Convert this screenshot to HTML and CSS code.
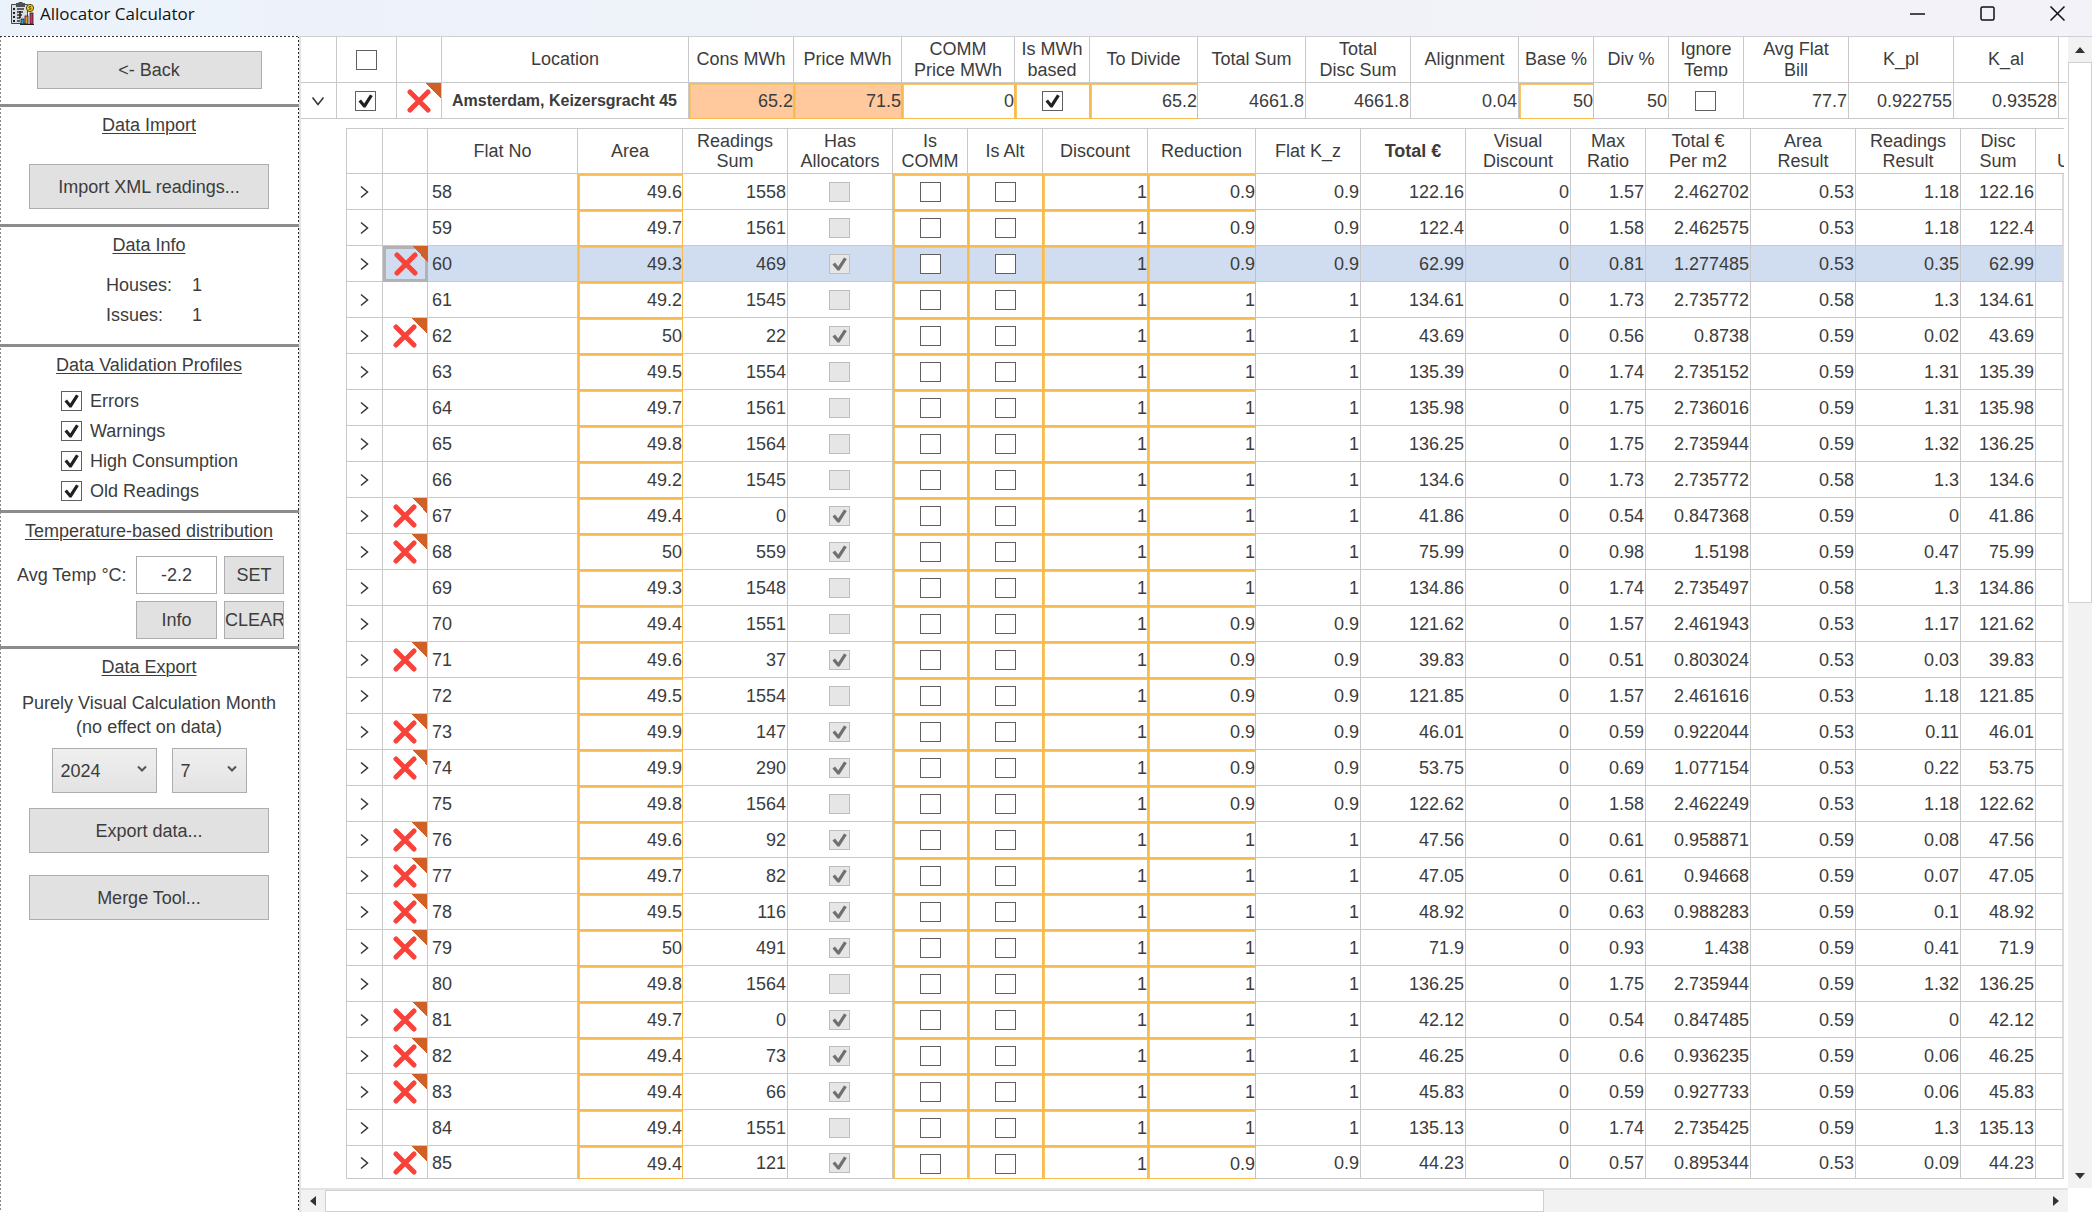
FILE: index.html
```html
<!DOCTYPE html>
<html lang="en">
<head>
<meta charset="utf-8">
<title>Allocator Calculator</title>
<link rel="stylesheet" href="styles.css">
</head>
<body>
<header class="titlebar">
  <svg class="logo" viewBox="0 0 24 24" aria-hidden="true">
    <rect x="1" y="3" width="17" height="20" rx="1" fill="#4a4a4a"/>
    <rect x="2" y="4" width="15" height="18" fill="#d9dde2"/>
    <path d="M6 2h2l1-1h3l1 1h2v4H6z" fill="#4a5258"/>
    <path d="M3 7h2v2H3zM3 11h2v2H3zM3 15h2v2H3zM3 19h2v2H3z" fill="#222"/>
    <path d="M7 8h7M7 11h6M7 14h5M7 17h3M7 20h3" stroke="#333" stroke-width="1.4"/>
    <path d="M10 10v7" stroke="#222" stroke-width="1.6"/>
    <rect x="11" y="18" width="3" height="5" fill="#2a9fd8" stroke="#222" stroke-width=".8"/>
    <rect x="15" y="15" width="3" height="8" fill="#f08a24" stroke="#222" stroke-width=".8"/>
    <rect x="20" y="12" width="3" height="11" fill="#d5305c" stroke="#222" stroke-width=".8"/>
    <circle cx="20" cy="7" r="3.6" fill="#f4cf1c" stroke="#3a3206" stroke-width=".9"/>
    <path d="M21.200 5.600h-1.600a.7.7 0 0 0 0 1.400h.8a.7.7 0 0 1 0 1.400h-1.600" fill="none" stroke="#3a3206" stroke-width=".8"/>
    <path d="M10 23.500h14" stroke="#222"/>
  </svg>
  <h1 class="title">Allocator Calculator</h1>
  <div class="window-buttons">
    <button type="button" aria-label="Minimize"><svg viewBox="0 0 16 16"><path d="M1 8h15"/></svg></button>
    <button type="button" aria-label="Maximize"><svg viewBox="0 0 16 16"><rect x="2" y="1" width="13" height="13" rx="1.500"/></svg></button>
    <button type="button" aria-label="Close"><svg viewBox="0 0 16 16"><path d="M1.500.5l14 14M15.500.5l-14 14"/></svg></button>
  </div>
</header>
<div class="workspace">
  <aside class="sidebar">
    <section class="panel panel-back">
      <button type="button" class="btn btn-back">&lt;- Back</button>
    </section>
    <section class="panel panel-import">
      <h2>Data Import</h2>
      <button type="button" class="btn btn-wide">Import XML readings...</button>
    </section>
    <section class="panel panel-info">
      <h2>Data Info</h2>
      <dl class="info"><dt>Houses:</dt><dd>1</dd><dt>Issues:</dt><dd>1</dd></dl>
    </section>
    <section class="panel panel-profiles">
      <h2>Data Validation Profiles</h2>
      <div class="profiles">
        <label><input type="checkbox" checked>Errors</label>
        <label><input type="checkbox" checked>Warnings</label>
        <label><input type="checkbox" checked>High Consumption</label>
        <label><input type="checkbox" checked>Old Readings</label>
      </div>
    </section>
    <section class="panel panel-temp">
      <h2>Temperature-based distribution</h2>
      <div class="temp">
        <label for="avg-temp">Avg Temp °C:</label>
        <input id="avg-temp" class="field" type="text" value="-2.2">
        <button type="button" class="btn">SET</button>
        <button type="button" class="btn temp-info">Info</button>
        <button type="button" class="btn">CLEAR</button>
      </div>
    </section>
    <section class="panel panel-export">
      <h2>Data Export</h2>
      <p>Purely Visual Calculation Month<br>(no effect on data)</p>
      <div class="period">
        <select class="year" aria-label="Year"><option>2024</option></select>
        <select class="month" aria-label="Month"><option>7</option></select>
      </div>
      <button type="button" class="btn btn-wide">Export data...</button>
      <button type="button" class="btn btn-wide">Merge Tool...</button>
    </section>
  </aside>
  <main class="grid">
    <div class="viewport">
      <table class="houses">
        <colgroup id="house-cols"></colgroup>
        <thead>
          <tr>
            <th></th>
            <th><input type="checkbox" aria-label="Select all houses"></th>
            <th></th>
            <th>Location</th><th>Cons MWh</th><th>Price MWh</th><th>COMM<br>Price MWh</th>
            <th>Is MWh<br>based</th><th>To Divide</th><th>Total Sum</th><th>Total<br>Disc Sum</th>
            <th>Alignment</th><th>Base %</th><th>Div %</th><th><span class="clipped">Ignore<br>Temp</span></th>
            <th>Avg Flat<br>Bill</th><th>K_pl</th><th>K_al</th><th></th>
          </tr>
        </thead>
        <tbody>
          <tr class="house">
            <td class="mid"><button type="button" class="expander" aria-label="Collapse house"><svg viewBox="0 0 14 14"><path d="M1.500 3.500L7 10.500l5.500-7"/></svg></button></td>
            <td class="mid"><input type="checkbox" checked aria-label="Select house"></td>
            <td class="mid issue"><svg class="cross" viewBox="0 0 24 24"><path d="M3 3l18 18M21 3L3 21"/></svg></td>
            <td class="location">Amsterdam, Keizersgracht 45</td>
            <td class="edit warm">65.2</td><td class="edit warm">71.5</td><td class="edit">0</td>
            <td class="edit mid"><input type="checkbox" checked aria-label="Is MWh based"></td>
            <td class="edit">65.2</td><td>4661.8</td><td>4661.8</td><td>0.04</td>
            <td class="edit">50</td><td>50</td>
            <td class="mid"><input type="checkbox" aria-label="Ignore temp"></td>
            <td>77.7</td><td>0.922755</td><td>0.93528</td><td></td>
          </tr>
        </tbody>
      </table>
      <div class="details">
        <table class="flats">
          <colgroup id="flat-cols"></colgroup>
          <thead>
            <tr>
              <th></th><th></th><th>Flat No</th><th>Area</th><th>Readings<br>Sum</th><th>Has<br>Allocators</th>
              <th>Is<br>COMM</th><th>Is Alt</th><th>Discount</th><th>Reduction</th><th>Flat K_z</th>
              <th class="strong">Total €</th><th>Visual<br>Discount</th><th>Max<br>Ratio</th><th>Total €<br>Per m2</th>
              <th>Area<br>Result</th><th>Readings<br>Result</th><th>Disc<br>Sum</th><th class="cut"><br>U</th>
            </tr>
          </thead>
          <tbody id="flat-rows"></tbody>
        </table>
      </div>
    </div>
    <div class="vbar" aria-hidden="true">
      <svg class="arrow" viewBox="0 0 10 6"><path d="M5 0l5 6H0z"/></svg>
      <div class="thumb"></div>
      <svg class="arrow" viewBox="0 0 10 6"><path d="M0 0h10L5 6z"/></svg>
    </div>
    <div class="hbar" aria-hidden="true">
      <svg class="arrow" viewBox="0 0 6 10"><path d="M6 0v10L0 5z"/></svg>
      <div class="thumb"></div>
      <svg class="arrow" viewBox="0 0 6 10"><path d="M0 0l6 5-6 5z"/></svg>
    </div>
  </main>
</div>
<script src="app.js"></script>
</body>
</html>
```
FILE: styles.css
```css
* { box-sizing: border-box; }
html, body { height: 100%; }
body {
  margin: 0;
  display: flex;
  flex-direction: column;
  overflow: hidden;
  background: #fff;
  color: #3c3c3c;
  font: 18px/24px "Liberation Sans", Arial, sans-serif;
}
button, input, select { font: inherit; color: inherit; margin: 0; }

/* Title bar */
.titlebar {
  flex: none;
  display: flex;
  align-items: flex-start;
  height: 36px;
  padding-left: 10px;
  background: linear-gradient(90deg, #ecf2fb, #f2f2f8 75%);
}
.logo { width: 24px; height: 24px; margin-top: 1px; }
.title {
  flex: 1;
  margin: 0 0 0 6px;
  color: #111;
  font: 17px/28px "Open Sans", "Noto Sans", sans-serif;
}
.window-buttons { display: flex; }
.window-buttons button {
  width: 70px;
  height: 28px;
  padding: 0;
  border: 0;
  background: none;
  line-height: 0;
}
.window-buttons svg { width: 16px; height: 16px; fill: none; stroke: #111; stroke-width: 1.5; }

.workspace { flex: 1; display: flex; min-height: 0; }

/* Sidebar */
.sidebar {
  flex: none;
  width: 299px;
  padding-top: 1px;
  text-align: center;
  background:
    repeating-linear-gradient(90deg, #333 0 2px, #fff 2px 4px) top / 100% 1px no-repeat,
    repeating-linear-gradient(#888 0 2px, #fff 2px 4px) left / 1px 100% no-repeat,
    repeating-linear-gradient(#222 0 2px, #fff 2px 4px) right / 1px 100% no-repeat;
}
.panel {
  display: flex;
  flex-direction: column;
  align-items: center;
  padding: 6px 1px 15px 0;
  border-bottom: 3px solid #8c8c8c;
}
.panel h2 { margin: 0; font-size: 18px; font-weight: 400; text-decoration: underline; text-underline-offset: 2px; text-decoration-thickness: 1px; }
.panel p { margin: 12px 0 9px; }
.panel-back { padding-top: 14px; }
.panel-import .btn { margin-top: 27px; }
.panel-info { padding-bottom: 14px; }
.panel-profiles { padding-bottom: 4px; }
.panel-temp { padding-bottom: 7px; }
.panel-export { border-bottom: 0; }
.panel-export .btn { margin-top: 15px; }
.panel-export .btn + .btn { margin-top: 22px; }
.btn, .field, select {
  height: 38px;
  padding: 0;
  border: 1px solid #adadad;
  border-radius: 0;
  background: #e1e1e1;
  text-align: center;
}
.btn { overflow: hidden; white-space: nowrap; }
.btn-back { width: 225px; }
.btn-wide { width: 240px; height: 45px; }
.field { width: 100%; background: #fff; }
.info {
  display: grid;
  grid-template-columns: 86px auto;
  align-self: flex-start;
  margin: 13px 0 0 106px;
  line-height: 30px;
  text-align: left;
}
.info dd { margin: 0; }
.profiles { align-self: flex-start; margin: 9px 0 0 61px; }
.profiles label { display: flex; align-items: center; gap: 8px; height: 30px; }
.temp {
  display: grid;
  grid-template-columns: 112px 81px 60px;
  gap: 7px;
  margin: 13px 0 0 3px;
  align-items: center;
  white-space: nowrap;
}
.temp label { text-align: left; }
.temp-info { grid-column: 2; }
.period { display: flex; gap: 15px; }
select {
  appearance: none;
  height: 45px;
  padding: 0 8px;
  text-align: left;
  background:
    url("data:image/svg+xml,%3Csvg xmlns='http://www.w3.org/2000/svg' width='10' height='8'%3E%3Cpath d='M1 1.500l4 4 4-4' fill='none' stroke='%23555' stroke-width='2'/%3E%3C/svg%3E") right 9px top 16px no-repeat,
    linear-gradient(#efefef, #e3e3e3);
}
.year { width: 105px; }
.month { width: 75px; }

/* Check boxes */
input[type="checkbox"] {
  appearance: none;
  flex: none;
  display: block;
  width: 21px;
  height: 20px;
  border: 1px solid #606060;
  background: #fff center no-repeat;
}
input[type="checkbox"]:checked {
  background-image: url("data:image/svg+xml,%3Csvg xmlns='http://www.w3.org/2000/svg' width='19' height='18'%3E%3Cpath d='M2.500 9.500l2.500-2 3.200 4L14 2.500l2.800 1.500L9.500 15.500l-2 0z' fill='%23202020'/%3E%3C/svg%3E");
}
input[type="checkbox"]:disabled { border-color: #bdbdbd; background-color: #e6e6e6; }
input[type="checkbox"]:disabled:checked {
  background-image: url("data:image/svg+xml,%3Csvg xmlns='http://www.w3.org/2000/svg' width='19' height='18'%3E%3Cpath d='M2.500 9.500l2.500-2 3.200 4L14 2.500l2.800 1.500L9.500 15.500l-2 0z' fill='%23707070'/%3E%3C/svg%3E");
}

/* Data grid */
.grid {
  flex: 1;
  min-width: 0;
  display: grid;
  grid-template: minmax(0, 1fr) 24px / minmax(0, 1fr) 24px;
  border-left: 2px solid #e2e2e2;
  border-top: 1px solid #d0d0d0;
}
.viewport { display: flex; flex-direction: column; min-height: 0; overflow: hidden; padding: 0 1px 8px 0; }
table { flex: none; table-layout: fixed; border-spacing: 0; width: 0; }
th, td { padding: 0; border: solid #c9c9c9; border-width: 0 1px 1px 0; overflow: hidden; white-space: nowrap; }
th { font-weight: 400; text-align: center; }
td { height: 36px; padding-right: 1px; text-align: right; }
th input, td input { margin: 0 auto; }
.houses th { height: 46px; line-height: 21px; }
.houses th:last-child, .houses td:last-child { border-right: 0; }
.clipped { display: block; clip-path: inset(0 0 4px); }
.houses .location { font-size: 16px; font-weight: 700; text-align: center; }
td.mid { padding: 0 2px 0 0; text-align: center; }
td.edit {
  padding: 0;
  border: 1px solid #f8bb50;
  box-shadow: inset 1px 1px #fac566;
}
.warm { background: #ffc99d; }
td.issue {
  padding-right: 0;
  background: linear-gradient(45deg, transparent 50%, #d06026 50%) right top / 16px 16px no-repeat border-box;
}
.cross { display: block; width: 24px; height: 24px; margin: 0 auto; fill: none; stroke: #f9423a; stroke-width: 5; stroke-linecap: round; }
.expander { display: block; width: 100%; height: 24px; padding: 0; border: 0; background: none; line-height: 0; }
.expander svg { width: 14px; height: 14px; fill: none; stroke: #333; stroke-width: 1.5; }

.details { flex: 1; min-height: 0; margin: 9px 3px 0 45px; overflow: hidden; }
.flats { border-top: 1px solid #c9c9c9; }
.flats th { height: 45px; line-height: 20px; }
.flats tr > :first-child { border-left: 1px solid #c9c9c9; }
.flats .strong { font-weight: 700; }
.flats .name { padding-left: 4px; text-align: left; }
.flats .cut { padding-left: 21px; border-right: 0; text-align: left; }
.flats td:last-child { border-right-width: 2px; border-right-color: #dcdcdc; }
.flats tbody tr:last-child td { height: 33px; padding-top: 2px; }
.flats .selected td:not(:first-child) { background-color: #d0ddf0; }
.flats .selected .issue {
  border: 0;
  background-image:
    linear-gradient(45deg, transparent 50%, #d06026 50%),
    linear-gradient(#b2b2b2, #b2b2b2), linear-gradient(#b2b2b2, #b2b2b2),
    linear-gradient(#b2b2b2, #b2b2b2), linear-gradient(#b2b2b2, #b2b2b2);
  background-position: right top, left top, left bottom, left top, right top;
  background-size: 16px 16px, 100% 3px, 100% 3px, 3px 100%, 3px 100%;
}

/* Scroll bars */
.vbar, .hbar { display: flex; align-items: center; background: #f2f2f2; }
.vbar { flex-direction: column; }
.arrow { flex: none; fill: #333; }
.vbar .arrow { width: 10px; height: 6px; margin: 10px 0 9px; }
.hbar .arrow { width: 6px; height: 10px; margin: 0 9px; }
.thumb { background: #fff; border: 1px solid #d0d0d0; }
.vbar .thumb { width: 100%; height: 47%; margin-bottom: auto; }
.hbar { border-top: 2px solid #e2e2e2; }
.hbar .thumb { width: 69%; height: 100%; margin-right: auto; }
```
FILE: app.js
```js
const houseWidths = [36, 60, 45, 247, 105, 108, 113, 75, 108, 108, 105, 108, 75, 75, 75, 105, 105, 105, 8];
const flatWidths = [37, 45, 150, 105, 105, 105, 75, 75, 105, 108, 105, 105, 105, 75, 105, 105, 105, 75, 28];

const fillCols = (id, widths) => {
  document.getElementById(id).innerHTML = widths.map(w => `<col style="width:${w}px">`).join('');
};
fillCols('house-cols', houseWidths);
fillCols('flat-cols', flatWidths);

// flat, area, readings sum, has allocators, reduction, total, max ratio, per m2, area result, readings result
const flats = `
58 49.6 1558 0 0.9 122.16 1.57 2.462702 0.53 1.18
59 49.7 1561 0 0.9 122.4 1.58 2.462575 0.53 1.18
60 49.3 469 1 0.9 62.99 0.81 1.277485 0.53 0.35
61 49.2 1545 0 1 134.61 1.73 2.735772 0.58 1.3
62 50 22 1 1 43.69 0.56 0.8738 0.59 0.02
63 49.5 1554 0 1 135.39 1.74 2.735152 0.59 1.31
64 49.7 1561 0 1 135.98 1.75 2.736016 0.59 1.31
65 49.8 1564 0 1 136.25 1.75 2.735944 0.59 1.32
66 49.2 1545 0 1 134.6 1.73 2.735772 0.58 1.3
67 49.4 0 1 1 41.86 0.54 0.847368 0.59 0
68 50 559 1 1 75.99 0.98 1.5198 0.59 0.47
69 49.3 1548 0 1 134.86 1.74 2.735497 0.58 1.3
70 49.4 1551 0 0.9 121.62 1.57 2.461943 0.53 1.17
71 49.6 37 1 0.9 39.83 0.51 0.803024 0.53 0.03
72 49.5 1554 0 0.9 121.85 1.57 2.461616 0.53 1.18
73 49.9 147 1 0.9 46.01 0.59 0.922044 0.53 0.11
74 49.9 290 1 0.9 53.75 0.69 1.077154 0.53 0.22
75 49.8 1564 0 0.9 122.62 1.58 2.462249 0.53 1.18
76 49.6 92 1 1 47.56 0.61 0.958871 0.59 0.08
77 49.7 82 1 1 47.05 0.61 0.94668 0.59 0.07
78 49.5 116 1 1 48.92 0.63 0.988283 0.59 0.1
79 50 491 1 1 71.9 0.93 1.438 0.59 0.41
80 49.8 1564 0 1 136.25 1.75 2.735944 0.59 1.32
81 49.7 0 1 1 42.12 0.54 0.847485 0.59 0
82 49.4 73 1 1 46.25 0.6 0.936235 0.59 0.06
83 49.4 66 1 1 45.83 0.59 0.927733 0.59 0.06
84 49.4 1551 0 1 135.13 1.74 2.735425 0.59 1.3
85 49.4 121 1 0.9 44.23 0.57 0.895344 0.53 0.09`.trim().split('\n').map(line => line.split(' '));

const cross = '<svg class="cross" viewBox="0 0 24 24"><path d="M3 3l18 18M21 3L3 21"/></svg>';
const chevron = '<svg viewBox="0 0 14 14"><path d="M4 1.500L10.500 7 4 12.500"/></svg>';

document.getElementById('flat-rows').innerHTML = flats.map(
  ([no, area, sum, has, reduction, total, ratio, perM2, areaResult, readings]) => {
    const flagged = has === '1';
    return `<tr${no === '60' ? ' class="selected"' : ''}>
      <td class="mid"><button type="button" class="expander" aria-label="Expand flat ${no}">${chevron}</button></td>
      <td class="mid${flagged ? ' issue' : ''}">${flagged ? cross : ''}</td>
      <td class="name">${no}</td>
      <td class="edit">${area}</td>
      <td>${sum}</td>
      <td class="mid"><input type="checkbox" disabled${flagged ? ' checked' : ''} aria-label="Has allocators"></td>
      <td class="edit mid"><input type="checkbox" aria-label="Is COMM"></td>
      <td class="edit mid"><input type="checkbox" aria-label="Is alt"></td>
      <td class="edit">1</td>
      <td class="edit">${reduction}</td>
      <td>${reduction}</td>
      <td>${total}</td>
      <td>0</td>
      <td>${ratio}</td>
      <td>${perM2}</td>
      <td>${areaResult}</td>
      <td>${readings}</td>
      <td>${total}</td>
      <td></td>
    </tr>`;
  }).join('');
```
